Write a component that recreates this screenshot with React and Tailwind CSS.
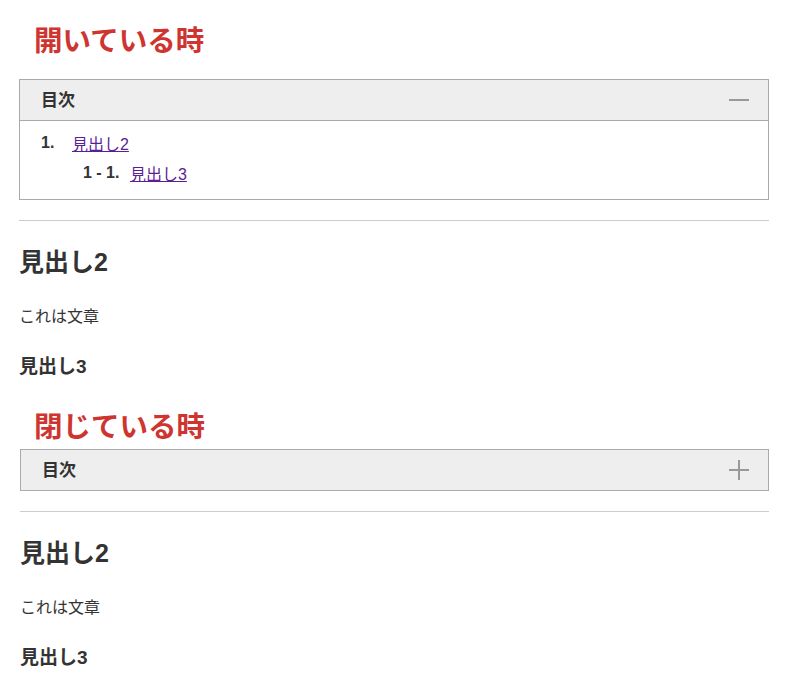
import { useState } from 'react';

const font = { fontFamily: '"Liberation Sans", "Noto Sans CJK JP", sans-serif' };

function TocBox({ defaultOpen }) {
  const [open, setOpen] = useState(defaultOpen);

  return (
    <div className="border border-[#aaaaaa]">
      <button
        onClick={() => setOpen(!open)}
        className="w-full h-[40px] bg-[#eeeeee] flex items-center justify-between pl-[21px] pr-[19px] text-[17px] font-bold text-[#333333]"
      >
        <span className="pt-[2px]">目次</span>
        {/* toggle icon */}
        <svg width="20" height="20" viewBox="0 0 20 20">
          <line x1="0" y1="10" x2="20" y2="10" stroke="#999999" strokeWidth="2" />
          {!open && <line x1="10" y1="0" x2="10" y2="20" stroke="#999999" strokeWidth="2" />}
        </svg>
      </button>
      {open && (
        <div className="border-t border-[#aaaaaa] pl-[21px] pt-[9px] pb-[9px] text-[16px] leading-[30px] text-[#333333]">
          <div className="flex">
            <span className="w-[31px] text-[16px] leading-[26px] font-bold">1.</span>
            <a href="#h2" className="text-[#5a1e96] underline">見出し2</a>
          </div>
          <div className="flex pl-[42px]">
            <span className="w-[47px] text-[16px] leading-[26px] font-bold">1 - 1.</span>
            <a href="#h3" className="text-[#5a1e96] underline">見出し3</a>
          </div>
        </div>
      )}
    </div>
  );
}

function Article() {
  return (
    <div className="text-[#333333]">
      <hr className="mt-[20px] border-0 border-t border-[#cccccc]" />
      <h2 className="mt-[26px] text-[25px] leading-[30px] font-bold">見出し2</h2>
      <p className="mt-[28px] text-[16px] leading-[24px]">これは文章</p>
      <h3 className="mt-[25px] text-[19px] leading-[26px] font-bold">見出し3</h3>
    </div>
  );
}

export default function App() {
  return (
    <div className="min-h-screen bg-white" style={font}>
      <div className="w-[750px] ml-[19px]">
        <h1 className="pt-[21px] pl-[15px] text-[28.5px] leading-[40px] font-bold text-[#cf3530]">開いている時</h1>
        <div className="mt-[18px]">
          <TocBox defaultOpen={true} />
        </div>
        <Article />

        <div className="ml-[1px]">
          <h1 className="mt-[27px] pl-[14px] text-[28.5px] leading-[40px] font-bold text-[#cf3530]">閉じている時</h1>
          <div className="mt-[2px]">
            <TocBox defaultOpen={false} />
          </div>
          <Article />
        </div>
      </div>
    </div>
  );
}
